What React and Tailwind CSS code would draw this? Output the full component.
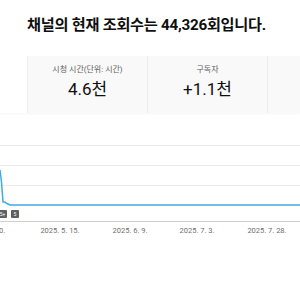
import React from "react";

const dates = [
    { x: 0, label: "20." },
    { x: 60, label: "2025. 5. 15." },
    { x: 130, label: "2025. 6. 9." },
    { x: 197, label: "2025. 7. 3." },
    { x: 267, label: "2025. 7. 28." },
];

const Chart = () => (
    <svg width="300" height="100" viewBox="0 0 300 100" className="block">
        {/* grid */}
        <line x1="0" y1="5.5" x2="300" y2="5.5" stroke="#ececec" />
        <line x1="0" y1="25.5" x2="300" y2="25.5" stroke="#ececec" />
        <line x1="0" y1="45.5" x2="300" y2="45.5" stroke="#ececec" />
        <line x1="0" y1="81.5" x2="300" y2="81.5" stroke="#cfcfcf" />
        {/* data */}
        <polyline
            points="0,30 1.5,42 3,62 5,62 7,63.5 10,65 300,65"
            fill="none"
            stroke="#41a9e6"
            strokeWidth="1.5"
        />
        {/* markers */}
        <rect x="-2" y="70" width="9" height="8" rx="1" fill="#606060" />
        <text x="2.5" y="76" fontSize="5" fill="#fff" textAnchor="middle" fontFamily="Roboto, sans-serif">5+</text>
        <rect x="11" y="70" width="8" height="8" rx="1" fill="#606060" />
        <text x="15" y="76" fontSize="5" fill="#fff" textAnchor="middle" fontFamily="Roboto, sans-serif">5</text>
        {dates.map((d) => (
            <text key={d.label} x={d.x} y="93" fontSize="7.5" fill="#6f6f6f" textAnchor="middle" fontFamily="Roboto, sans-serif">
                {d.label}
            </text>
        ))}
    </svg>
);

const Card = ({ label, value, selected }) => (
    <div className={"w-[120px] shrink-0 flex flex-col items-center pt-[8px] " + (selected ? "bg-white" : "bg-[#f9f9f9] border-l border-[#ececec]")}>
        <div className="text-[8px] leading-[12px] text-[#606060]">{label}</div>
        <div className="text-[17px] leading-[22px] text-[#0f0f0f] mt-[2px]">{value}</div>
    </div>
);

export default function App() {
    return (
        <div className="w-[300px] h-[300px] bg-white overflow-hidden font-['Roboto','Noto_Sans_CJK_KR',sans-serif]">
            <div className="h-[50px] flex items-center pl-[27px]">
                <h1 className="text-[15.2px] font-bold text-[#0f0f0f] whitespace-nowrap tracking-[-0.25px]">
                    채널의 현재 조회수는 44,326회입니다.
                </h1>
            </div>
            <div className="mt-[6px] flex h-[57px] -ml-[93px] shadow-[0_1px_2px_rgba(0,0,0,0.04)]">
                <Card label="" value="" selected />
                <Card label="시청 시간(단위: 시간)" value="4.6천" />
                <Card label="구독자" value="+1.1천" />
                <Card label="" value="" />
            </div>
            <div className="mt-[27px]">
                <Chart />
            </div>
        </div>
    );
}
